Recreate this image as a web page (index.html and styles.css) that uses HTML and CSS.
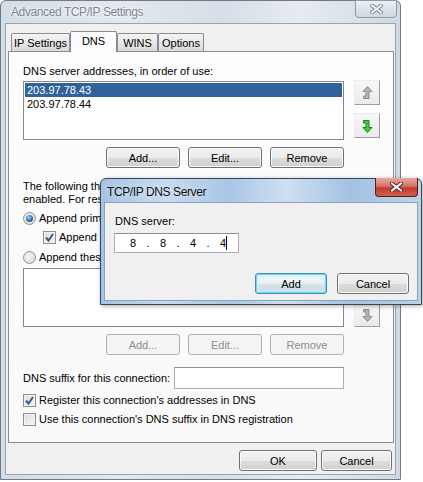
FILE: index.html
```html
<!DOCTYPE html>
<html>
<head>
<meta charset="utf-8">
<link rel="stylesheet" href="styles.css">
</head>
<body>
<div class="window">
  <div class="titlebar">
    <span class="title">Advanced TCP/IP Settings</span>
    <div class="close close-inactive">
      <svg width="13" height="10" viewBox="0 0 13 10"><path d="M2,1.5 L11,8.5 M11,1.5 L2,8.5" stroke="#7c8692" stroke-width="4" stroke-linecap="square"/><path d="M2,1.5 L11,8.5 M11,1.5 L2,8.5" stroke="#f4f6f8" stroke-width="2" stroke-linecap="square"/></svg>
    </div>
  </div>
  <div class="client">
    <div class="tabs">
      <div class="tab t1">IP Settings</div>
      <div class="tab t2 sel">DNS</div>
      <div class="tab t3">WINS</div>
      <div class="tab t4">Options</div>
    </div>
    <div class="panel">
      <div class="label">DNS server addresses, in order of use:</div>
      <div class="list-row">
        <div class="listbox">
          <div class="item sel">203.97.78.43</div>
          <div class="item">203.97.78.44</div>
        </div>
        <div class="arrows">
          <div class="arrow-btn">
            <svg width="11" height="14" viewBox="0 0 11 14"><path d="M5.5,0.5 L10,5.5 L7,5.5 L7,12.5 L1.5,12.5 L1.5,10 L4,10 L4,5.5 L1,5.5 Z" fill="#b4b4b4" stroke="#8c8c8c" stroke-width="1"/></svg>
          </div>
          <div class="arrow-btn">
            <svg width="11" height="14" viewBox="0 0 11 14"><path d="M5.5,13.5 L10,8.5 L7,8.5 L7,1.5 L1.5,1.5 L1.5,4 L4,4 L4,8.5 L1,8.5 Z" fill="#3ad33a" stroke="#14861a" stroke-width="1"/></svg>
          </div>
        </div>
      </div>
      <div class="btn-row">
        <div class="btn">Add...</div>
        <div class="btn">Edit...</div>
        <div class="btn">Remove</div>
      </div>
      <div class="para">The following three settings are applied to all connections with TCP/IP<br>enabled. For resolution of unqualified names:</div>
      <div class="opt r1"><span class="radio on"></span><span>Append primary and connection specific DNS suffixes</span></div>
      <div class="opt c1"><span class="check on"><svg width="11" height="11" viewBox="0 0 11 11"><path d="M2,5.5 L4.5,8.5 L9,2" fill="none" stroke="#3a5a94" stroke-width="2"/></svg></span><span>Append parent suffixes of the primary DNS suffix</span></div>
      <div class="opt r2"><span class="radio"></span><span>Append these DNS suffixes (in order):</span></div>
      <div class="list-row list2">
        <div class="listbox"></div>
        <div class="arrows">
          <div class="arrow-btn">
            <svg width="11" height="14" viewBox="0 0 11 14"><path d="M5.5,0.5 L10,5.5 L7,5.5 L7,12.5 L1.5,12.5 L1.5,10 L4,10 L4,5.5 L1,5.5 Z" fill="#b4b4b4" stroke="#8c8c8c" stroke-width="1"/></svg>
          </div>
          <div class="arrow-btn">
            <svg width="11" height="14" viewBox="0 0 11 14"><path d="M5.5,13.5 L10,8.5 L7,8.5 L7,1.5 L1.5,1.5 L1.5,4 L4,4 L4,8.5 L1,8.5 Z" fill="#b4b4b4" stroke="#8c8c8c" stroke-width="1"/></svg>
          </div>
        </div>
      </div>
      <div class="btn-row">
        <div class="btn dis">Add...</div>
        <div class="btn dis">Edit...</div>
        <div class="btn dis">Remove</div>
      </div>
      <div class="suffix-row">
        <span class="suffix-label">DNS suffix for this connection:</span>
        <div class="textbox"></div>
      </div>
      <div class="opt c2"><span class="check on"><svg width="11" height="11" viewBox="0 0 11 11"><path d="M2,5.5 L4.5,8.5 L9,2" fill="none" stroke="#3a5a94" stroke-width="2"/></svg></span><span>Register this connection's addresses in DNS</span></div>
      <div class="opt c3"><span class="check"></span><span>Use this connection's DNS suffix in DNS registration</span></div>
    </div>
    <div class="footer">
      <div class="btn ok">OK</div>
      <div class="btn cancel">Cancel</div>
    </div>
  </div>
</div>

<div class="dialog">
  <div class="dtitle">
    <span class="dtext">TCP/IP DNS Server</span>
    <div class="close close-active">
      <svg width="13" height="10" viewBox="0 0 13 10"><path d="M2,1.5 L11,8.5 M11,1.5 L2,8.5" stroke="#5a2020" stroke-width="4" stroke-linecap="square"/><path d="M2,1.5 L11,8.5 M11,1.5 L2,8.5" stroke="#ffffff" stroke-width="2" stroke-linecap="square"/></svg>
    </div>
  </div>
  <div class="dbody">
    <div class="dlabel">DNS server:</div>
    <div class="ipbox">
      <span class="oct">8</span><span class="dot">.</span><span class="oct">8</span><span class="dot">.</span><span class="oct">4</span><span class="dot">.</span><span class="oct">4<i class="caret"></i></span>
    </div>
    <div class="dbtns">
      <div class="btn dbtn def">Add</div>
      <div class="btn dbtn">Cancel</div>
    </div>
  </div>
</div>
</body>
</html>
```

FILE: styles.css
```css
* { box-sizing: border-box; }
body {
  margin: 0;
  width: 423px;
  height: 482px;
  overflow: hidden;
  position: relative;
  background: #ffffff;
  font-family: "Liberation Sans", Arial, sans-serif;
  font-size: 11px;
  color: #000;
}

/* main window */
.window {
  width: 401px;
  height: 480px;
  display: flex;
  flex-direction: column;
  border: 1px solid #6f7a86;
  border-radius: 6px 6px 0 0;
  background: linear-gradient(90deg, #d3dce5 0%, #e3e8ee 30%, #d6dee7 55%, #e6ebf0 75%, #d0d9e3 100%);
  padding: 0 4px 4px 4px;
}
.titlebar {
  height: 22px;
  display: flex;
  justify-content: space-between;
  align-items: flex-start;
}
.title {
  padding: 4px 0 0 6px;
  font-size: 12px;
  letter-spacing: -0.4px;
  color: #7d858f;
  text-shadow: 0 0 5px #fff, 0 0 2px #fff;
}
.close {
  width: 42px;
  height: 18px;
  margin-top: -1px;
  border-radius: 0 0 4px 4px;
  display: flex;
  align-items: center;
  justify-content: center;
}
.close-inactive {
  margin-right: -1px;
  border: 1px solid #8f9aa6;
  background: linear-gradient(#eef2f5, #dce3ea 50%, #cfd8e1);
}
.client {
  flex: 1;
  display: flex;
  flex-direction: column;
  background: #f0f0f0;
  border: 1px solid #9aa4ae;
  padding: 9px 0 0 2px;
}

/* tabs */
.tabs {
  display: flex;
  align-items: flex-end;
  height: 18px;
  margin-left: 3px;
  position: relative;
  z-index: 1;
}
.tab {
  height: 18px;
  border: 1px solid #898c95;
  border-bottom: none;
  border-radius: 2px 2px 0 0;
  background: linear-gradient(#f4f4f4, #e8e8e8 50%, #dadada);
  display: flex;
  align-items: center;
  justify-content: center;
}
.t1 { width: 59px; }
.t2 { width: 47px; }
.t3 { width: 41px; }
.t4 { width: 46px; }
.tab.sel {
  height: 21px;
  margin-bottom: -1px;
  background: #fcfcfc;
  padding-bottom: 3px;
}

/* panel */
.panel {
  width: 386px;
  height: 392px;
  border: 1px solid #898c95;
  background: linear-gradient(#fdfdfd, #f9f9f9);
  padding: 13px 0 0 14px;
  display: flex;
  flex-direction: column;
}
.label, .para, .opt { line-height: 13px; white-space: nowrap; }
.list-row {
  display: flex;
  margin-top: 3px;
}
.listbox {
  width: 321px;
  height: 59px;
  border: 1px solid #828790;
  background: #fff;
  padding: 1px;
}
.item {
  height: 14px;
  line-height: 14px;
  padding-left: 2px;
}
.item.sel { background: #31629b; color: #fff; }
.arrows {
  margin-left: 10px;
  margin-top: -1px;
  display: flex;
  flex-direction: column;
  gap: 8px;
}
.list2 { margin-top: 4px; }
.list2 .arrows { margin-top: 0; gap: 9px; }
.arrow-btn {
  width: 26px;
  height: 25px;
  border: 1px solid;
  border-color: #ececec #9c9c9c #9c9c9c #ececec;
  background: linear-gradient(#f7f7f7, #ebebeb);
  display: flex;
  align-items: center;
  justify-content: center;
}

.btn-row {
  width: 321px;
  display: flex;
  justify-content: flex-end;
  gap: 8px;
  margin-top: 7px;
}
.btn {
  width: 74px;
  height: 21px;
  border: 1px solid #707070;
  border-radius: 3px;
  background: linear-gradient(#f2f2f2 0%, #ebebeb 50%, #dddddd 51%, #cfcfcf 100%);
  box-shadow: inset 0 0 0 1px #fbfbfb;
  display: flex;
  align-items: center;
  justify-content: center;
}
.btn.dis {
  border-color: #adb2b5;
  background: #f4f4f4;
  box-shadow: none;
  color: #8d8d8d;
}
.para { margin-top: 12px; }
.opt { display: flex; align-items: center; height: 13px; }
.r1 { margin-top: 6px; }
.c1 { margin-top: 6px; margin-left: 20px; }
.r2 { margin-top: 7px; }
.c2 { margin-top: 5px; }
.c3 { margin-top: 6px; }
.radio {
  width: 13px;
  height: 13px;
  border-radius: 50%;
  border: 1px solid #8e8f8f;
  background: radial-gradient(circle at 40% 40%, #f4f4f4, #d8d8d8);
  margin-right: 3px;
  display: flex;
  align-items: center;
  justify-content: center;
}
.radio.on::after {
  content: "";
  width: 7px;
  height: 7px;
  border-radius: 50%;
  background: radial-gradient(circle at 40% 35%, #a7d8f8, #2a71b4 55%, #154a7c);
}
.check {
  width: 13px;
  height: 13px;
  border: 1px solid #8e8f8f;
  background: linear-gradient(135deg, #dcdcdc, #f6f6f6);
  box-shadow: inset 0 0 0 1px #f2f2f2;
  margin-right: 3px;
  display: flex;
  align-items: center;
  justify-content: center;
}

.suffix-row {
  display: flex;
  align-items: center;
  margin-top: 12px;
}
.suffix-label { width: 151px; }
.textbox {
  width: 170px;
  height: 22px;
  border: 1px solid #abadb3;
  border-top-color: #8e9196;
  background: #fff;
}

.footer {
  display: flex;
  justify-content: flex-end;
  gap: 4px;
  margin-top: 7px;
  padding-right: 3px;
}
.ok { width: 78px; }
.cancel { width: 71px; }

/* DNS server dialog */
.dialog {
  position: absolute;
  left: 100px;
  top: 178px;
  width: 322px;
  height: 127px;
  display: flex;
  flex-direction: column;
  border: 1px solid #34485c;
  border-radius: 6px 6px 0 0;
  background: linear-gradient(90deg, #a6c3e3 0%, #c6daef 20%, #a9c6e5 40%, #cfe0f1 58%, #a3c1e2 78%, #bcd3ec 100%);
  padding: 0 3px 3px 3px;
  box-shadow: 1px 1px 4px rgba(0,0,0,0.35);
}
.dtitle {
  height: 23px;
  display: flex;
  justify-content: space-between;
  align-items: flex-start;
}
.dtext {
  padding: 6px 0 0 3px;
  font-size: 12px;
  letter-spacing: -0.4px;
  color: #111;
  text-shadow: 0 0 6px #e8f2fb;
}
.close-active {
  width: 43px;
  height: 19px;
  border: 1px solid #5b1b16;
  border-top: none;
  background: linear-gradient(#e8a8a0 0%, #d47468 45%, #c23b2c 55%, #d0624f 100%);
}
.dbody {
  flex: 1;
  background: #f0f0f0;
  border: 1px solid #8aa1b9;
  padding: 12px 0 0 10px;
  display: flex;
  flex-direction: column;
}
.dlabel { line-height: 13px; }
.ipbox {
  width: 125px;
  height: 20px;
  margin-top: 5px;
  margin-left: -1px;
  border: 1px solid #abadb3;
  border-top-color: #8e9196;
  background: #fff;
  display: flex;
  align-items: center;
  padding-left: 8px;
}
.oct { width: 20px; text-align: center; position: relative; }
.dot { width: 10px; text-align: center; }
.caret {
  position: absolute;
  top: -1px;
  left: 13px;
  width: 1px;
  height: 14px;
  background: #000;
}
.dbtns {
  display: flex;
  justify-content: flex-end;
  gap: 10px;
  margin-top: 20px;
  padding-right: 8px;
}
.dbtn { width: 72px; }
.def {
  border-color: #3c8fb6;
  box-shadow: inset 0 0 0 1px #6fd6f2, inset 0 0 3px 2px #c8eefb;
  background: linear-gradient(#f2f7f9 0%, #e9f1f5 50%, #d8e4ea 51%, #cad9e1 100%);
}
```
